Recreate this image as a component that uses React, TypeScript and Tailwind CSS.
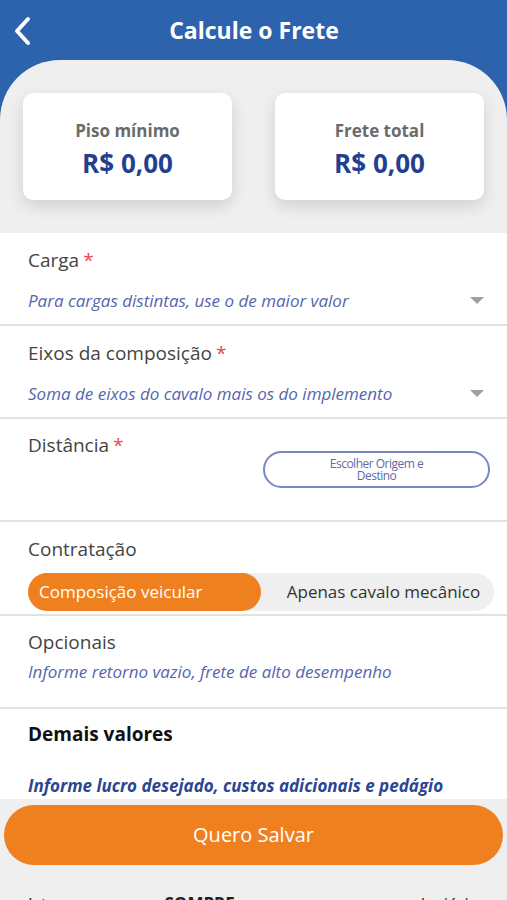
import React from 'react';

const font = { fontFamily: '"Open Sans", "Noto Sans", sans-serif' };

function Caret() {
  return (
    <svg width="14" height="8" viewBox="0 0 14 8" className="shrink-0">
      <path d="M0 0 L14 0 L7 7 Z" fill="#a0a0a0" />
    </svg>
  );
}

function Divider() {
  return <div className="h-[2px] bg-[#e2e2e2]" />;
}

function Required() {
  return <span className="text-[#e5484d] ml-1">*</span>;
}

function ValueCard({ title }: { title: string }) {
  return (
    <div className="flex-1 h-[107px] rounded-[10px] bg-white shadow-[0_6px_16px_rgba(0,0,0,0.13)] flex flex-col items-center pt-[27px]">
      <span className="text-[17px] font-bold text-[#6b6b6b] leading-[22px]">{title}</span>
      <span className="text-[26px] font-bold text-[#243f90] leading-[34px] mt-[4px]">R$ 0,00</span>
    </div>
  );
}

function SelectRow({ label, hint }: { label: string; hint: string }) {
  return (
    <div className="pl-[28px] pr-[23px] pt-[13px] h-[91px]">
      <div className="text-[19px] text-[#444] leading-7">{label}<Required /></div>
      <div className="flex items-center justify-between mt-[15px]">
        <span className="text-[17px] italic text-[#5566ad] leading-6">{hint}</span>
        <Caret />
      </div>
    </div>
  );
}

export default function App() {
  return (
    <div style={font} className="w-[507px] h-[900px] overflow-hidden bg-[#efefef]">
      {/* Header */}
      <div className="bg-[#2d63ad]">
        <div className="h-[60px] flex items-center relative">
          <svg width="22" height="30" viewBox="0 0 22 30" className="absolute left-[11px] top-[16px]">
            <path d="M17 3 L6 15 L17 27" stroke="white" strokeWidth="4" fill="none" strokeLinecap="round" strokeLinejoin="round" />
          </svg>
          <h1 className="w-full text-center text-white text-[23px] font-bold leading-none pl-[1px]">Calcule o Frete</h1>
        </div>
        <div className="bg-[#efefef] rounded-t-[60px] px-[23px] pt-[33px] pb-[33px] flex gap-[43px]">
          <ValueCard title="Piso mínimo" />
          <ValueCard title="Frete total" />
        </div>
      </div>

      {/* Form */}
      <div className="bg-white">
        <SelectRow label="Carga" hint="Para cargas distintas, use o de maior valor" />
        <Divider />
        <SelectRow label="Eixos da composição" hint="Soma de eixos do cavalo mais os do implemento" />
        <Divider />
        <div className="pl-[28px] pr-[17px] pt-[12px] h-[101px] flex justify-between">
          <div className="text-[19px] text-[#444] leading-7">Distância<Required /></div>
          <button className="mt-[20px] w-[227px] h-[37px] rounded-full border-2 border-[#7b87c2] text-[12px] leading-[12px] text-[#5f6aa8] tracking-[-0.5px]">
            Escolher Origem e<br />Destino
          </button>
        </div>
        <Divider />
        <div className="pl-[28px] pr-[13px] pt-[13px] h-[92px]">
          <div className="text-[19px] text-[#444] leading-7">Contratação</div>
          <div className="mt-[10px] h-[38px] rounded-full bg-[#efefef] flex items-center">
            <div className="w-[233px] h-full rounded-full bg-[#ef8020] text-white text-[17px] flex items-center pl-[11px]">
              Composição veicular
            </div>
            <div className="flex-1 text-center text-[17px] text-[#333] pl-[12px] whitespace-nowrap">Apenas cavalo mecânico</div>
          </div>
        </div>
        <Divider />
        <div className="px-[28px] pt-[12px] h-[91px]">
          <div className="text-[19px] text-[#444] leading-7">Opcionais</div>
          <div className="text-[17px] italic text-[#5566ad] leading-6 mt-[4px]">Informe retorno vazio, frete de alto desempenho</div>
        </div>
        <Divider />
        <div className="px-[28px] pt-[12px] h-[90px]">
          <div className="text-[19px] font-bold text-[#111] leading-[26px]">Demais valores</div>
          <div className="text-[17px] font-bold italic text-[#2b4593] leading-6 mt-[27px]">Informe lucro desejado, custos adicionais e pedágio</div>
        </div>
      </div>

      {/* Footer */}
      <div className="px-[4px] pt-[6px]">
        <button className="w-full h-[60px] rounded-full bg-[#ef8020] text-white text-[20px]">Quero Salvar</button>
      </div>
      <div className="px-[28px] pt-[27px] flex justify-between text-[17px] leading-6 text-[#222]">
        <span>Isto</span>
        <span className="font-bold">SOMPRE</span>
        <span>para o rodoviário</span>
      </div>
    </div>
  );
}
